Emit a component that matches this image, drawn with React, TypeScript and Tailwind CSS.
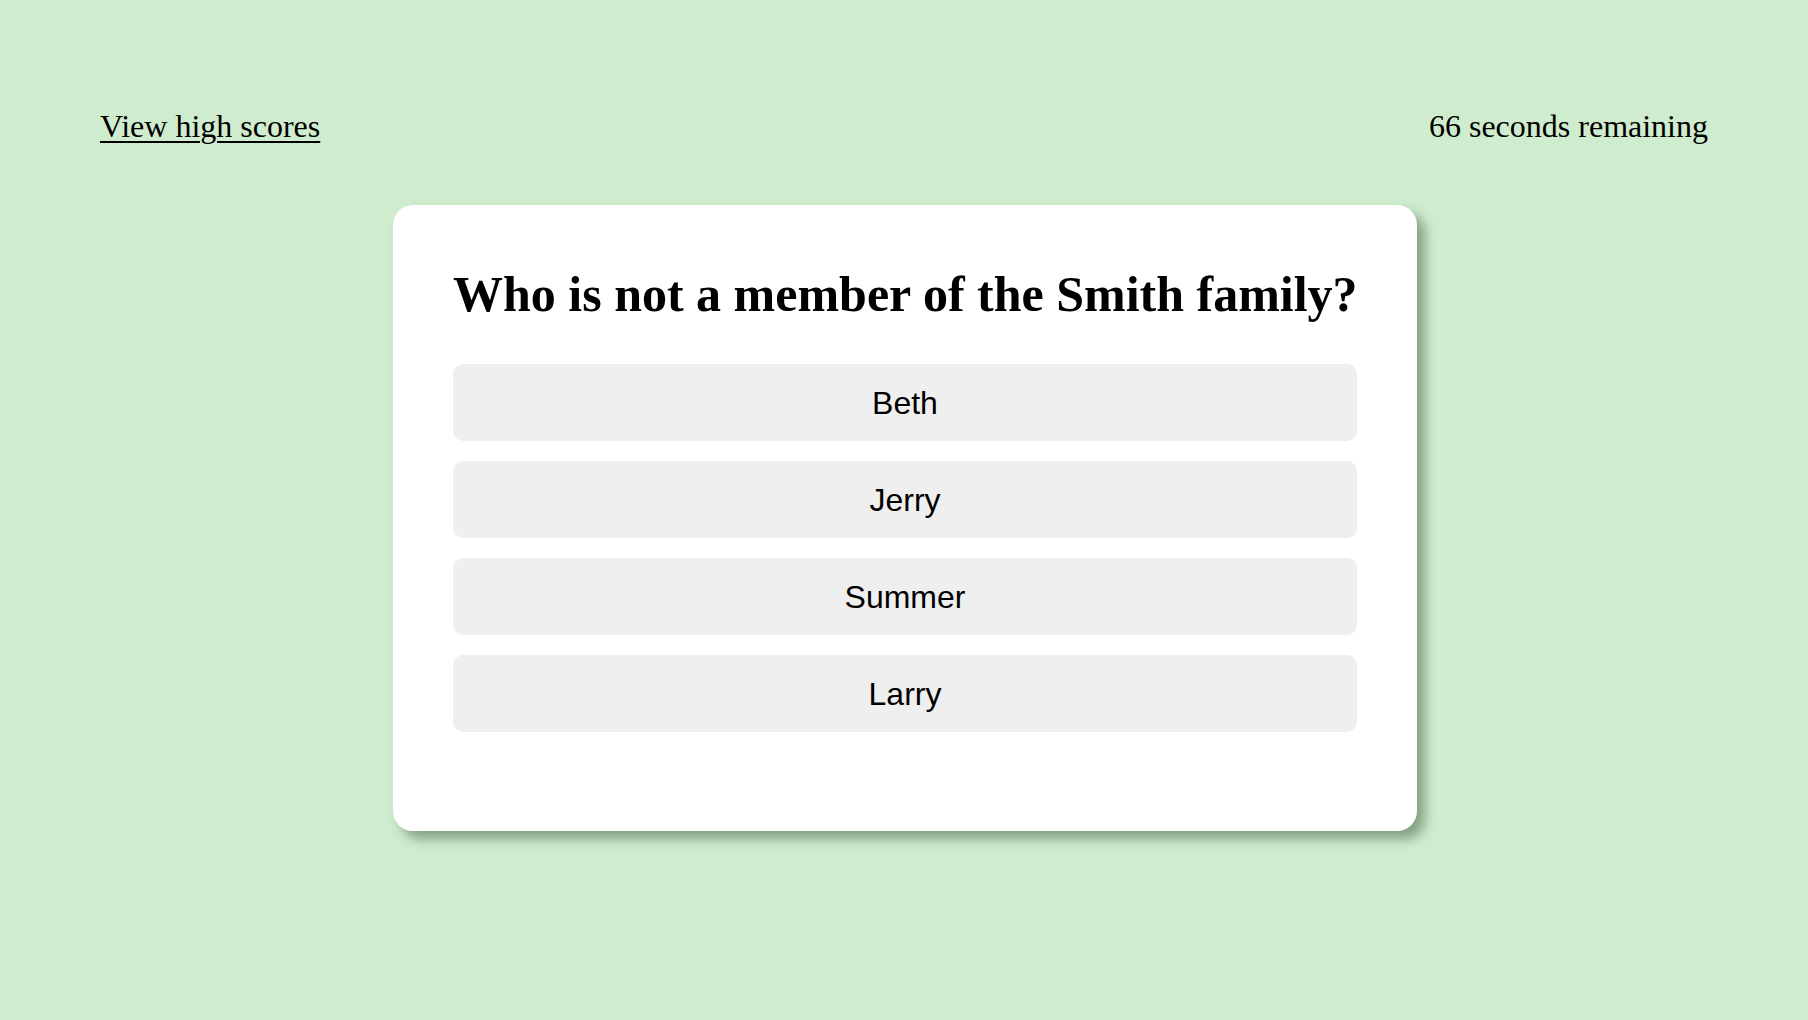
import React from "react";

const answers = ["Beth", "Jerry", "Summer", "Larry"];

export default function App() {
  return (
    <div className="min-h-screen bg-[#d0ecce] text-black">
      <header className="flex items-start justify-between px-[100px] pt-[108px] font-['Liberation_Serif',serif] text-[32px] leading-[37px]">
        <a href="#" className="underline underline-offset-[4px] decoration-[2px]">
          View high scores
        </a>
        <span>66 seconds remaining</span>
      </header>

      <main className="mt-[60px] flex justify-center pl-[2px]">
        <div className="w-[1024px] rounded-[20px] bg-white px-[60px] pt-[60px] pb-[99px] shadow-[8px_8px_12px_rgba(40,70,40,0.45)]">
          <h1 className="mb-[41px] whitespace-nowrap text-center font-['Liberation_Serif',serif] text-[50px] font-bold leading-[58px]">
            Who is not a member of the Smith family?
          </h1>
          <div className="flex flex-col gap-[20px]">
            {answers.map((answer) => (
              <button
                key={answer}
                type="button"
                className="h-[77px] w-full rounded-[10px] bg-[#efefef] font-['Liberation_Sans',Arial,sans-serif] text-[32px]"
              >
                {answer}
              </button>
            ))}
          </div>
        </div>
      </main>
    </div>
  );
}
